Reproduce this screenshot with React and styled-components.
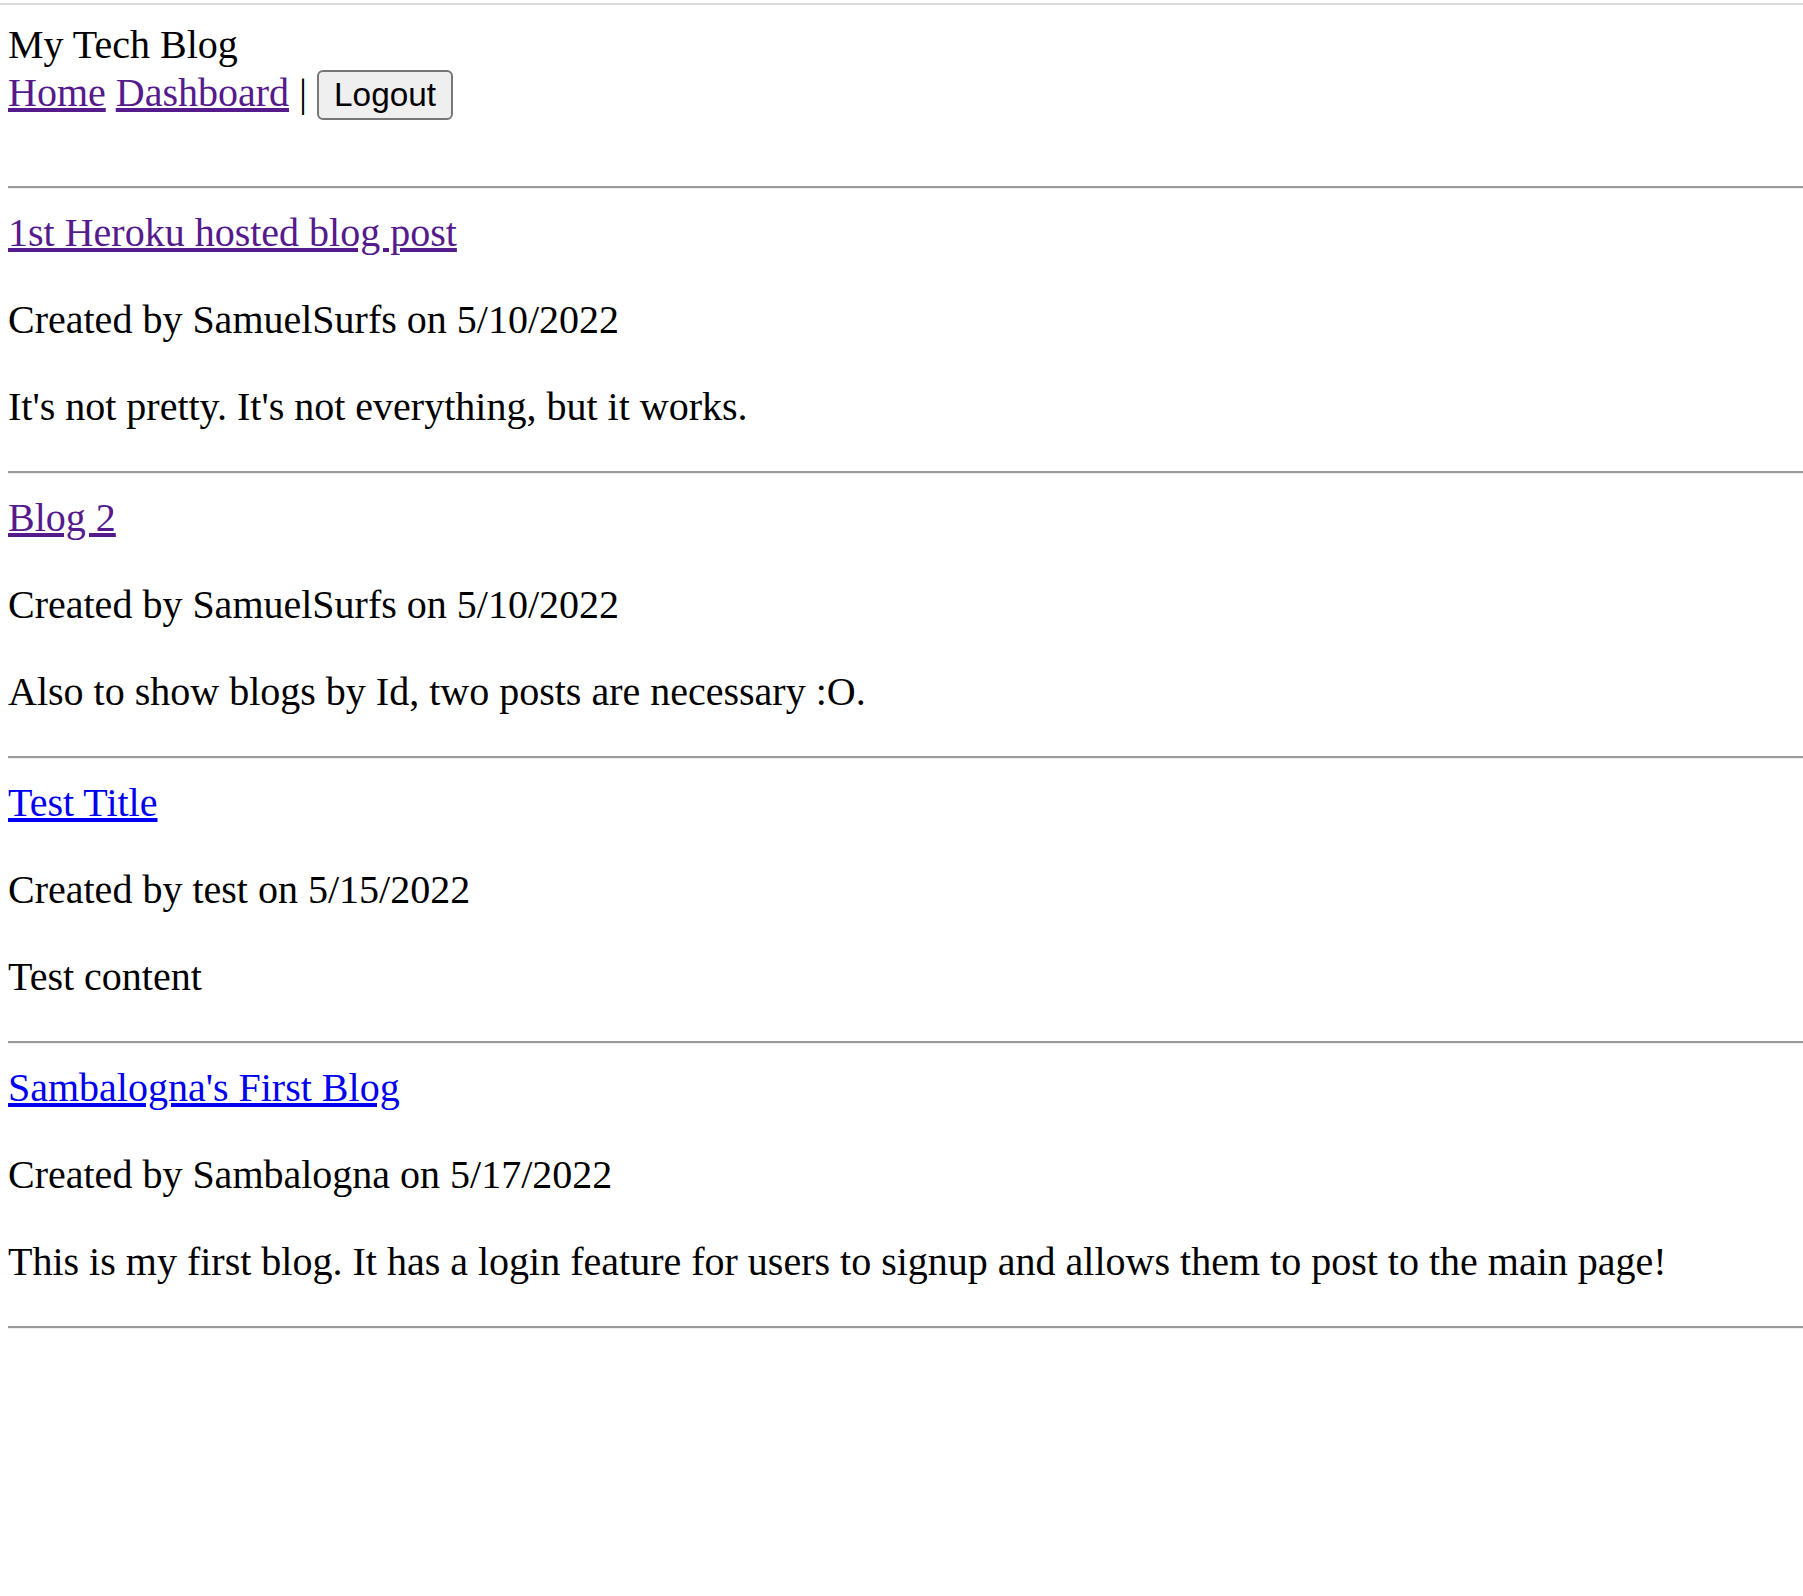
import React from 'react';
import styled, { createGlobalStyle } from 'styled-components';

const GlobalStyle = createGlobalStyle`
  html, body {
    margin: 0;
    padding: 0;
    background: #ffffff;
  }
  body {
    font-family: "Liberation Serif", "Times New Roman", serif;
    font-size: 40px;
    line-height: 47px;
    color: #000000;
  }
`;

const TopRule = styled.div`
  margin-top: 3px;
  border-top: 2px solid #dadada;
`;

const Page = styled.div`
  padding: 16px 0 0 8px;
`;

const Header = styled.header`
  padding-bottom: 46px;
`;

const SiteTitle = styled.div`
  margin: 0;
`;

const Nav = styled.nav`
  margin: 0;
  padding-top: 1px;
`;

const Link = styled.a`
  color: ${(p) => (p.$visited ? '#551a8b' : '#0000ee')};
  text-decoration: underline;
  cursor: pointer;
`;

const LogoutButton = styled.button`
  font-family: "Liberation Sans", Arial, sans-serif;
  font-size: 33.33px;
  line-height: normal;
  color: #000000;
  background: #efefef;
  border: 2px solid #767676;
  border-radius: 6px;
  padding: 4px 15px;
  margin: 0;
  vertical-align: baseline;
`;

const Rule = styled.hr`
  margin: 20px 0;
  height: 0;
  border: 0;
  border-top: 2px solid #9a9a9a;
  border-bottom: 1px solid #eeeeee;
`;

const PostTitle = styled.div`
  margin: 0;
`;

const Text = styled.p`
  margin: 40px 0 ${(p) => (p.$last ? '41px' : '40px')};
`;

const posts = [
  {
    title: '1st Heroku hosted blog post',
    author: 'SamuelSurfs',
    date: '5/10/2022',
    content: "It's not pretty. It's not everything, but it works.",
    visited: true,
  },
  {
    title: 'Blog 2',
    author: 'SamuelSurfs',
    date: '5/10/2022',
    content: 'Also to show blogs by Id, two posts are necessary :O.',
    visited: true,
  },
  {
    title: 'Test Title',
    author: 'test',
    date: '5/15/2022',
    content: 'Test content',
    visited: false,
  },
  {
    title: "Sambalogna's First Blog",
    author: 'Sambalogna',
    date: '5/17/2022',
    content:
      'This is my first blog. It has a login feature for users to signup and allows them to post to the main page!',
    visited: false,
  },
];

function Post({ post }) {
  return (
    <article>
      <PostTitle>
        <Link $visited={post.visited}>{post.title}</Link>
      </PostTitle>
      <Text>
        Created by {post.author} on {post.date}
      </Text>
      <Text $last>{post.content}</Text>
      <Rule />
    </article>
  );
}

export default function App() {
  return (
    <>
      <GlobalStyle />
      <TopRule />
      <Page>
        <Header>
          <SiteTitle>My Tech Blog</SiteTitle>
          <Nav>
            <Link $visited>Home</Link> <Link $visited>Dashboard</Link> |{' '}
            <LogoutButton>Logout</LogoutButton>
          </Nav>
        </Header>
        <Rule />
        {posts.map((post) => (
          <Post key={post.title} post={post} />
        ))}
      </Page>
    </>
  );
}
